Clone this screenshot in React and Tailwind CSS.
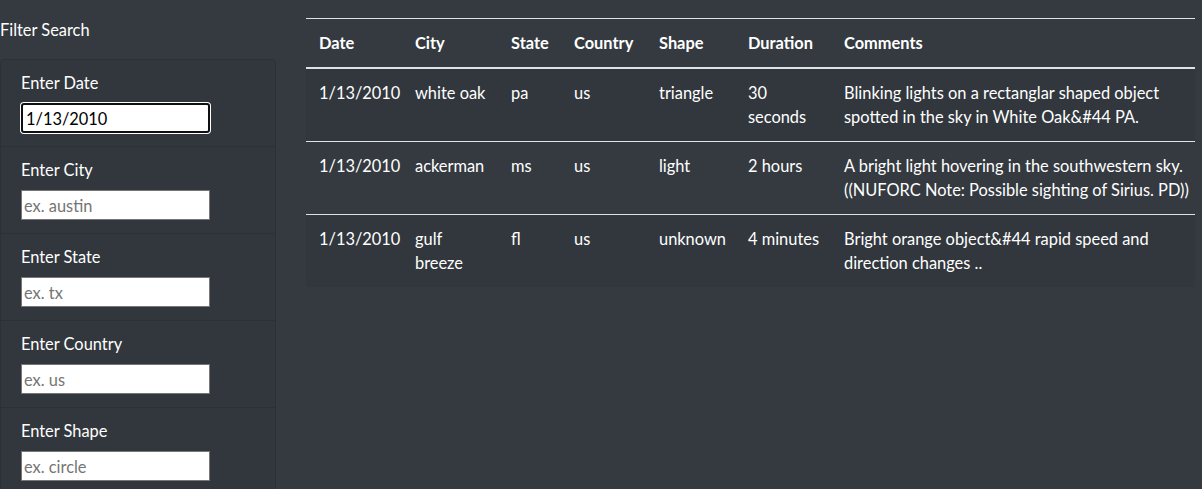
import { useState } from "react";

const SIGHTINGS = [
  {
    date: "1/13/2010",
    city: ["white oak"],
    state: "pa",
    country: "us",
    shape: "triangle",
    duration: ["30", "seconds"],
    comments: ["Blinking lights on a rectanglar shaped object", "spotted in the sky in White Oak&#44 PA."],
  },
  {
    date: "1/13/2010",
    city: ["ackerman"],
    state: "ms",
    country: "us",
    shape: "light",
    duration: ["2 hours"],
    comments: ["A bright light hovering in the southwestern sky.", "((NUFORC Note: Possible sighting of Sirius. PD))"],
  },
  {
    date: "1/13/2010",
    city: ["gulf", "breeze"],
    state: "fl",
    country: "us",
    shape: "unknown",
    duration: ["4 minutes"],
    comments: ["Bright orange object&#44 rapid speed and", "direction changes .."],
  },
];

const FILTERS = [
  { id: "datetime", label: "Enter Date", placeholder: "1/1/2010" },
  { id: "city", label: "Enter City", placeholder: "ex. austin" },
  { id: "state", label: "Enter State", placeholder: "ex. tx" },
  { id: "country", label: "Enter Country", placeholder: "ex. us" },
  { id: "shape", label: "Enter Shape", placeholder: "ex. circle" },
];

function Lines({ lines }) {
  return lines.map((l, i) => (
    <span key={i} className="block whitespace-nowrap">{l}</span>
  ));
}

export default function App() {
  const [values, setValues] = useState({ datetime: "1/13/2010" });

  return (
    <div
      className="h-[489px] overflow-hidden bg-[#343a40] text-white text-[16.4px] leading-6 flex"
      style={{ fontFamily: '"Segoe UI", Lato, "Noto Sans", sans-serif' }}
    >
      {/* Sidebar filters */}
      <div className="w-[276px] flex-shrink-0 pt-[18px]">
        <div className="mb-[17px]">Filter Search</div>
        <ul className="rounded-[4px] border border-[#2c3136] bg-[#31373d] min-h-[460px]">
          {FILTERS.map((f, i) => {
            const focused = i === 0;
            return (
              <li
                key={f.id}
                className={`px-5 pt-[11px] pb-[13px] ${i > 0 ? "border-t border-[#2c3136]" : ""}`}
              >
                <label htmlFor={f.id} className="block mb-2">{f.label}</label>
                <input
                  id={f.id}
                  type="text"
                  placeholder={f.placeholder}
                  value={values[f.id] || ""}
                  onChange={(e) => setValues({ ...values, [f.id]: e.target.value })}
                  className={
                    focused
                      ? "block w-[189px] h-[30px] bg-white text-black px-[3px] border-2 border-[#101010] rounded-[3px] shadow-[0_0_0_1px_#ffffff] outline-none"
                      : "block w-[189px] h-[30px] bg-white text-black px-[2px] border border-[#767676] placeholder:text-[#757575] outline-none"
                  }
                />
              </li>
            );
          })}
        </ul>
      </div>

      {/* Results table */}
      <div className="ml-[30px] pt-[18px]">
        <table className="w-[889px] table-fixed border-collapse">
          <colgroup>
            <col className="w-[96px]" />
            <col className="w-[96px]" />
            <col className="w-[63px]" />
            <col className="w-[85px]" />
            <col className="w-[89px]" />
            <col className="w-[96px]" />
            <col />
          </colgroup>
          <thead>
            <tr>
              {["Date", "City", "State", "Country", "Shape", "Duration", "Comments"].map((h) => (
                <th
                  key={h}
                  className="text-left font-bold py-3 pl-[13px] pr-3 border-t border-b-2 border-[#dee2e6] align-bottom"
                >
                  {h}
                </th>
              ))}
            </tr>
          </thead>
          <tbody>
            {SIGHTINGS.map((s, i) => (
              <tr key={i} className={i % 2 === 0 ? "bg-[#31373d]" : ""}>
                <td className="py-3 pl-[13px] pr-3 align-top border-t border-[#dee2e6]">{s.date}</td>
                <td className="py-3 pl-[13px] pr-3 align-top border-t border-[#dee2e6]"><Lines lines={s.city} /></td>
                <td className="py-3 pl-[13px] pr-3 align-top border-t border-[#dee2e6]">{s.state}</td>
                <td className="py-3 pl-[13px] pr-3 align-top border-t border-[#dee2e6]">{s.country}</td>
                <td className="py-3 pl-[13px] pr-3 align-top border-t border-[#dee2e6]">{s.shape}</td>
                <td className="py-3 pl-[13px] pr-3 align-top border-t border-[#dee2e6]"><Lines lines={s.duration} /></td>
                <td className="py-3 pl-[13px] pr-3 align-top border-t border-[#dee2e6]"><Lines lines={s.comments} /></td>
              </tr>
            ))}
          </tbody>
        </table>
      </div>
    </div>
  );
}
